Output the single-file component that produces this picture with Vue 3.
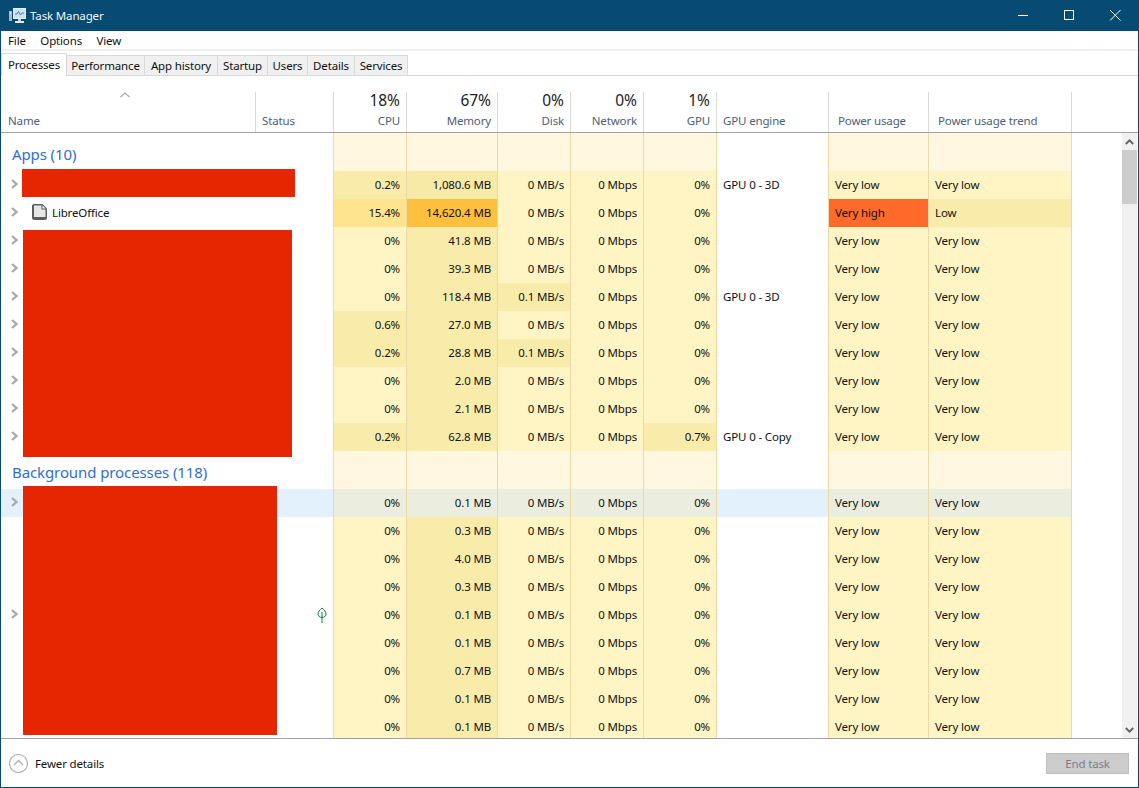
<script setup>
const appRows = [
  ['', 'h2', '0.2%', 'h2', '1,080.6 MB', 'h3', '0 MB/s', 'h1', '0 Mbps', 'h1', '0%', 'h1', 'GPU 0 - 3D', 'Very low', 'h1', 'Very low', 'h1'],
  ['LibreOffice', 'h4', '15.4%', 'h4', '14,620.4 MB', 'h5', '0 MB/s', 'h1', '0 Mbps', 'h1', '0%', 'h1', '', 'Very high', 'h6', 'Low', 'h2'],
  ['', 'h1', '0%', 'h1', '41.8 MB', 'h2', '0 MB/s', 'h1', '0 Mbps', 'h1', '0%', 'h1', '', 'Very low', 'h1', 'Very low', 'h1'],
  ['', 'h1', '0%', 'h1', '39.3 MB', 'h2', '0 MB/s', 'h1', '0 Mbps', 'h1', '0%', 'h1', '', 'Very low', 'h1', 'Very low', 'h1'],
  ['', 'h1', '0%', 'h1', '118.4 MB', 'h2', '0.1 MB/s', 'h2', '0 Mbps', 'h1', '0%', 'h1', 'GPU 0 - 3D', 'Very low', 'h1', 'Very low', 'h1'],
  ['', 'h2', '0.6%', 'h2', '27.0 MB', 'h2', '0 MB/s', 'h1', '0 Mbps', 'h1', '0%', 'h1', '', 'Very low', 'h1', 'Very low', 'h1'],
  ['', 'h2', '0.2%', 'h2', '28.8 MB', 'h2', '0.1 MB/s', 'h2', '0 Mbps', 'h1', '0%', 'h1', '', 'Very low', 'h1', 'Very low', 'h1'],
  ['', 'h1', '0%', 'h1', '2.0 MB', 'h2', '0 MB/s', 'h1', '0 Mbps', 'h1', '0%', 'h1', '', 'Very low', 'h1', 'Very low', 'h1'],
  ['', 'h1', '0%', 'h1', '2.1 MB', 'h2', '0 MB/s', 'h1', '0 Mbps', 'h1', '0%', 'h1', '', 'Very low', 'h1', 'Very low', 'h1'],
  ['', 'h2', '0.2%', 'h2', '62.8 MB', 'h2', '0 MB/s', 'h1', '0 Mbps', 'h1', '0.7%', 'h2', 'GPU 0 - Copy', 'Very low', 'h1', 'Very low', 'h1']
]
const toRow = (r, extra = {}) => ({
  name: r[0],
  cells: [[r[2], r[3]], [r[4], r[5]], [r[6], r[7]], [r[8], r[9]], [r[10], r[11]]],
  engine: r[12],
  power: [r[13], r[14]],
  trend: [r[15], r[16]],
  ...extra
})
const apps = appRows.map((r) => toRow(r))
const bg = ['0.1', '0.3', '4.0', '0.3', '0.1', '0.1', '0.7', '0.1', '0.1'].map((m, i) =>
  toRow(['', 'h1', '0%', 'h1', m + ' MB', 'h2', '0 MB/s', 'h1', '0 Mbps', 'h1', '0%', 'h1', '', 'Very low', 'h1', 'Very low', 'h1'], {
    hover: i === 0,
    leaf: i === 4,
    chevron: i === 0 || i === 4
  })
)
const groups = [
  { title: 'Apps (10)', rows: apps },
  { title: 'Background processes (118)', rows: bg }
]
const tabs = ['Processes', 'Performance', 'App history', 'Startup', 'Users', 'Details', 'Services']
const menus = ['File', 'Options', 'View']
const headers = [
  ['18%', 'CPU'],
  ['67%', 'Memory'],
  ['0%', 'Disk'],
  ['0%', 'Network'],
  ['1%', 'GPU']
]
</script>

<template>
  <div class="window">
    <div class="titlebar">
      <svg class="appicon" width="17" height="15" viewBox="0 0 17 15">
        <rect x="4.500" y="0.500" width="12" height="10" fill="#cfe0ee" stroke="#e8eef3" />
        <path d="M6 6H8L9.500 3.500L11.500 7L13 5H15" fill="none" stroke="#3a86c4" />
        <rect x="0" y="3" width="3" height="10" fill="#aeb6bc" />
        <rect x="1" y="4" width="1" height="2" fill="#e8eef3" />
        <rect x="9" y="11" width="3" height="2" fill="#c8d0d6" />
        <rect x="6" y="13" width="9" height="2" fill="#e4e8ec" />
      </svg>
      <span class="title">Task Manager</span>
      <div class="winbtns">
        <svg width="46" height="31" viewBox="0 0 46 31"><path d="M18 15.500H28" stroke="#fff" /></svg>
        <svg width="46" height="31" viewBox="0 0 46 31"><rect x="18.500" y="10.500" width="9" height="9" fill="none" stroke="#fff" /></svg>
        <svg width="46" height="31" viewBox="0 0 46 31"><path d="M18 10L28.500 20.500M28.500 10L18 20.500" stroke="#fff" /></svg>
      </div>
    </div>

    <div class="menubar">
      <span v-for="m in menus" :key="m" class="menu">{{ m }}</span>
    </div>

    <div class="tabs">
      <div v-for="(t, i) in tabs" :key="t" class="tab" :class="{ active: i === 0 }">{{ t }}</div>
    </div>

    <div class="tablehead">
      <div class="hcell hname">
        <svg class="sort" width="10" height="6" viewBox="0 0 10 6"><path d="M0.500 5L5 1L9.500 5" fill="none" stroke="#a9a9b3" stroke-width="1.200" /></svg>
        <span class="hlabel">Name</span>
      </div>
      <div class="hcell"><span class="hlabel">Status</span></div>
      <div v-for="h in headers" :key="h[1]" class="hcell hnum">
        <span class="hpct">{{ h[0] }}</span>
        <span class="hlabel">{{ h[1] }}</span>
      </div>
      <div class="hcell"><span class="hlabel">GPU engine</span></div>
      <div class="hcell hpower"><span class="hlabel">Power usage</span></div>
      <div class="hcell hpower"><span class="hlabel">Power usage trend</span></div>
    </div>

    <div class="body">
      <div class="table">
        <template v-for="g in groups" :key="g.title">
          <div class="row grouprow">
            <div class="cell groupname">{{ g.title }}</div>
            <div class="cell status"></div>
            <div v-for="n in 5" :key="n" class="cell h0"></div>
            <div class="cell plain"></div>
            <div class="cell h0"></div>
            <div class="cell h0"></div>
          </div>
          <div v-for="(r, ri) in g.rows" :key="ri" class="row" :class="{ hover: r.hover }">
            <div class="cell namecell">
              <svg v-if="r.chevron !== false" class="chev" width="7" height="10" viewBox="0 0 7 10"><path d="M1 1L5.500 5L1 9" fill="none" stroke="#a8a8a8" stroke-width="2.200" /></svg>
              <template v-if="r.name">
                <svg class="docicon" width="15" height="16" viewBox="0 0 15 16">
                  <path d="M0 2Q0 0 2 0H10.500L15 4.500V13.500Q15 16 12.500 16H2.500Q0 16 0 13.500Z" fill="#5e5e5e" />
                  <path d="M2 1.500H9.500V5.500H13.500V13H2Z" fill="#e6e6e6" />
                  <path d="M10.500 1.500L13.500 4.500H10.500Z" fill="#fbfbfb" />
                </svg>
                <span class="procname">{{ r.name }}</span>
              </template>
            </div>
            <div class="cell status">
              <svg v-if="r.leaf" class="leaf" width="10" height="16" viewBox="0 0 10 16">
                <path d="M5 1C2.500 3 1 5 1 7C1 9 2.800 10.500 5 10.500C7.200 10.500 9 9 9 7C9 5 7.500 3 5 1Z" fill="none" stroke="#12803a" />
                <path d="M5 5V16" stroke="#12803a" />
              </svg>
            </div>
            <div v-for="(c, ci) in r.cells" :key="ci" class="cell num" :class="c[1]">{{ c[0] }}</div>
            <div class="cell plain text">{{ r.engine }}</div>
            <div class="cell text" :class="r.power[1]">{{ r.power[0] }}</div>
            <div class="cell text" :class="r.trend[1]">{{ r.trend[0] }}</div>
          </div>
        </template>
      </div>

      <div class="scrollbar">
        <div class="sbtn">
          <svg width="9" height="6" viewBox="0 0 9 6"><path d="M0.800 5L4.500 1.300L8.200 5" fill="none" stroke="#606060" stroke-width="1.800" /></svg>
        </div>
        <div class="thumb"></div>
        <div class="track"></div>
        <div class="sbtn">
          <svg width="9" height="6" viewBox="0 0 9 6"><path d="M0.800 1L4.500 4.700L8.200 1" fill="none" stroke="#606060" stroke-width="1.800" /></svg>
        </div>
      </div>

      <div class="redact r1"></div>
      <div class="redact r2"></div>
      <div class="redact r3"></div>
    </div>

    <div class="footer">
      <div class="fewer">
        <svg width="19" height="19" viewBox="0 0 19 19">
          <circle cx="9.500" cy="9.500" r="9" fill="#fff" stroke="#b0b0b0" stroke-width="1.200" />
          <path d="M5 11L9.500 6.500L14 11" fill="none" stroke="#b0b0b0" stroke-width="1.400" />
        </svg>
        <span>Fewer details</span>
      </div>
      <button class="endtask" disabled>End task</button>
    </div>
  </div>
</template>

<style>
html, body { margin: 0; background: #fff; overflow: hidden; }
</style>

<style scoped>
.window {
  width: 1139px;
  height: 788px;
  box-sizing: border-box;
  border: 1px solid #074a72;
  border-top: 0;
  display: flex;
  flex-direction: column;
  background: #fff;
  font-family: "Noto Sans", "Open Sans", sans-serif;
  font-size: 11.500px;
  letter-spacing: -0.150px;
  color: #111;
  overflow: hidden;
}
.titlebar {
  height: 31px;
  flex: none;
  margin: 0 -1px;
  background: #074a72;
  color: #fff;
  display: flex;
  align-items: center;
  padding: 0 1px 0 9px;
}
.appicon { flex: none; }
.title { margin-left: 4px; color: #f2f6f9; }
.winbtns { margin-left: auto; display: flex; }
.winbtns svg { display: block; }
.menubar {
  height: 20px;
  box-sizing: border-box;
  flex: none;
  display: flex;
  align-items: center;
  gap: 14.500px;
  padding-left: 7px;
  border-bottom: 2px solid #f0f0f0;
}
.tabs {
  height: 24px;
  flex: none;
  display: grid;
  grid-template-columns: 66px 78px 73px 50px 40px 47px 53px;
  align-items: end;
  border-bottom: 1px solid #d9d9d9;
}
.tab {
  height: 20px;
  box-sizing: border-box;
  display: flex;
  align-items: center;
  justify-content: center;
  background: #f0f0f0;
  border: 1px solid #d9d9d9;
  border-left: 0;
  border-bottom: 0;
}
.tab.active {
  height: 23px;
  margin-bottom: -1px;
  padding-bottom: 2px;
  background: #fff;
  border-left: 1px solid #d9d9d9;
  position: relative;
}
.tablehead {
  margin-top: 16px;
  height: 41px;
  box-sizing: border-box;
  flex: none;
  display: grid;
  grid-template-columns: 255px 78px 73px 91px 73px 73px 73px 112px 100px 143px;
  grid-template-rows: 40px;
  border-bottom: 1px solid #a0a0a0;
}
.hcell {
  box-sizing: border-box;
  border-right: 1px solid #d9d9d9;
  display: flex;
  flex-direction: column;
  justify-content: flex-end;
  padding: 0 6px 3px;
  position: relative;
}
.hname { padding-left: 7px; }
.hnum { align-items: flex-end; }
.hpower { padding-left: 9px; }
.hlabel { color: #4c607a; line-height: 16px; }
.hpct { font-size: 15.500px; letter-spacing: 0; line-height: 17px; margin-bottom: 4px; color: #222; }
.sort { position: absolute; left: 119px; top: 0; }
.body {
  flex: 1;
  min-height: 0;
  display: flex;
  position: relative;
  overflow: hidden;
  border-bottom: 1px solid #a0a0a0;
}
.table { width: 1071px; flex: none; }
.row {
  display: grid;
  grid-template-columns: 255px 78px 73px 91px 73px 73px 73px 112px 100px 143px;
  height: 28px;
}
.grouprow { height: 38px; }
.cell {
  box-sizing: border-box;
  display: flex;
  align-items: center;
  border-right: 1px solid #ecd9a3;
  padding: 0 6px 2px;
  white-space: nowrap;
}
.namecell, .groupname { border-right: 0; }
.namecell { padding: 0 0 2px 10px; }
.groupname {
  font-size: 15px;
  letter-spacing: -0.100px;
  color: #2f6fd0;
  padding: 3px 0 0 11px;
}
.status { justify-content: flex-end; padding: 0 6px 0 0; }
.num { justify-content: flex-end; }
.plain { background: #fff; }
.h0 { background: #fff7e0; }
.h1 { background: #fff4c4; }
.h2 { background: #f9ecaa; }
.h3 { background: #f7e9a6; }
.h4 { background: #ffe48f; }
.h5 { background: #ffc03f; }
.h6 { background: #ff6a2a; }
.row.hover .namecell, .row.hover .status, .row.hover .plain { background: #e3f1fc; }
.row.hover .h1, .row.hover .h2 { background: #ebeedf; }
.chev { flex: none; }
.docicon { margin-left: 14px; flex: none; }
.procname { margin-left: 5px; }
.scrollbar {
  position: absolute;
  right: 1px;
  top: 0;
  bottom: 0;
  width: 15px;
  display: flex;
  flex-direction: column;
  background: #f0f0f0;
}
.sbtn { height: 17px; flex: none; display: flex; align-items: center; justify-content: center; }
.thumb { height: 54px; flex: none; background: #cdcdcd; }
.track { flex: 1; }
.redact { position: absolute; background: #e62600; }
.r1 { left: 21px; top: 36px; width: 273px; height: 28px; }
.r2 { left: 22px; top: 97px; width: 269px; height: 227px; }
.r3 { left: 22px; top: 353px; width: 254px; height: 249px; }
.footer {
  flex: none;
  height: 48px;
  display: flex;
  align-items: center;
  justify-content: space-between;
  padding: 0 9px 0 8px;
}
.fewer { display: flex; align-items: center; gap: 7px; }
.endtask {
  width: 83px;
  height: 21px;
  box-sizing: border-box;
  background: #cccccc;
  border: 1px solid #bfbfbf;
  color: #7d7d8a;
  font: inherit;
  letter-spacing: inherit;
  padding: 0;
}
</style>
